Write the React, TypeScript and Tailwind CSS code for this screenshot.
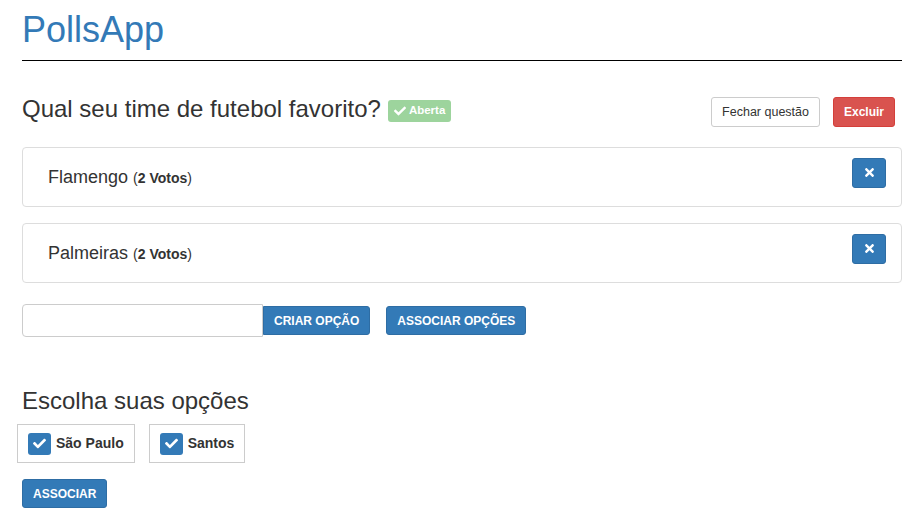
import { FaCheck, FaTimes } from "react-icons/fa";

const options = [
  { id: 1, name: "Flamengo", votes: 2 },
  { id: 2, name: "Palmeiras", votes: 2 },
];

const choices = ["São Paulo", "Santos"];

export default function App() {
  return (
    <div className="min-h-screen bg-white font-['Liberation_Sans',Arial,sans-serif] text-[#333]">
      <div className="pl-[22px] pr-[20px]">
        {/* Header */}
        <h1 className="mt-[10px] text-[36px] leading-[40px] text-[#337ab7]">PollsApp</h1>
        <div className="mt-[10px] border-t border-black" />

        {/* Question row */}
        <div className="mt-[35px] flex items-start justify-between">
          <div className="flex items-start">
            <h2 className="text-[24px] leading-[26px]">Qual seu time de futebol favorito?</h2>
            <span className="ml-[7px] mt-[4px] inline-flex h-[22px] items-center gap-[3px] rounded-[3px] bg-[#9dd49d] px-[6px] text-[11.5px] font-bold text-white">
              <FaCheck className="h-[12px] w-[12px]" />
              Aberta
            </span>
          </div>
          <div className="mr-[7px] mt-[1px] flex gap-[13px]">
            <button className="h-[30px] rounded-[3px] border border-[#ccc] bg-white px-[10px] text-[12.5px] text-[#333]">
              Fechar questão
            </button>
            <button className="h-[30px] rounded-[3px] border border-[#d43f3a] bg-[#d9534f] px-[10px] text-[12px] font-bold text-white">
              Excluir
            </button>
          </div>
        </div>

        {/* Options */}
        <div className="mt-[20px] flex flex-col gap-[16px]">
          {options.map((opt) => (
            <div
              key={opt.id}
              className="flex h-[60px] items-center justify-between rounded-[4px] border border-[#ddd] pl-[25px] pr-[15px]"
            >
              <span className="text-[18px]">
                {opt.name}{" "}
                <span className="text-[14px]">
                  (<b>{opt.votes} Votos</b>)
                </span>
              </span>
              <button className="mb-[9px] flex h-[30px] w-[34px] items-center justify-center rounded-[3px] border border-[#2e6da4] bg-[#337ab7] text-white">
                <FaTimes className="h-[13px] w-[13px]" />
              </button>
            </div>
          ))}
        </div>

        {/* New option */}
        <div className="mt-[21px] flex items-center">
          <input
            type="text"
            className="h-[33px] w-[241px] rounded-l-[4px] border border-[#ccc] px-2 text-[14px] outline-none"
          />
          <button className="h-[29px] rounded-r-[3px] border border-[#2e6da4] bg-[#337ab7] px-[10px] text-[12px] font-bold text-white">
            CRIAR OPÇÃO
          </button>
          <button className="ml-[16px] h-[29px] rounded-[3px] border border-[#2e6da4] bg-[#337ab7] px-[10px] text-[12px] font-bold text-white">
            ASSOCIAR OPÇÕES
          </button>
        </div>

        {/* Choose options */}
        <h2 className="mt-[51px] text-[24px] leading-[26px]">Escolha suas opções</h2>
        <div className="-ml-[5px] mt-[10px] flex gap-[14px]">
          {choices.map((c) => (
            <label
              key={c}
              className="flex h-[39px] items-center gap-[5px] border border-[#ccc] pl-[10px] pr-[10px]"
            >
              <span className="flex h-[22px] w-[23px] items-center justify-center rounded-[3px] bg-[#337ab7] text-white">
                <FaCheck className="h-[13px] w-[13px]" />
              </span>
              <span className="text-[14px] font-bold">{c}</span>
            </label>
          ))}
        </div>
        <button className="mt-[16px] h-[29px] rounded-[3px] border border-[#2e6da4] bg-[#337ab7] px-[10px] text-[12px] font-bold text-white">
          ASSOCIAR
        </button>
      </div>
    </div>
  );
}
